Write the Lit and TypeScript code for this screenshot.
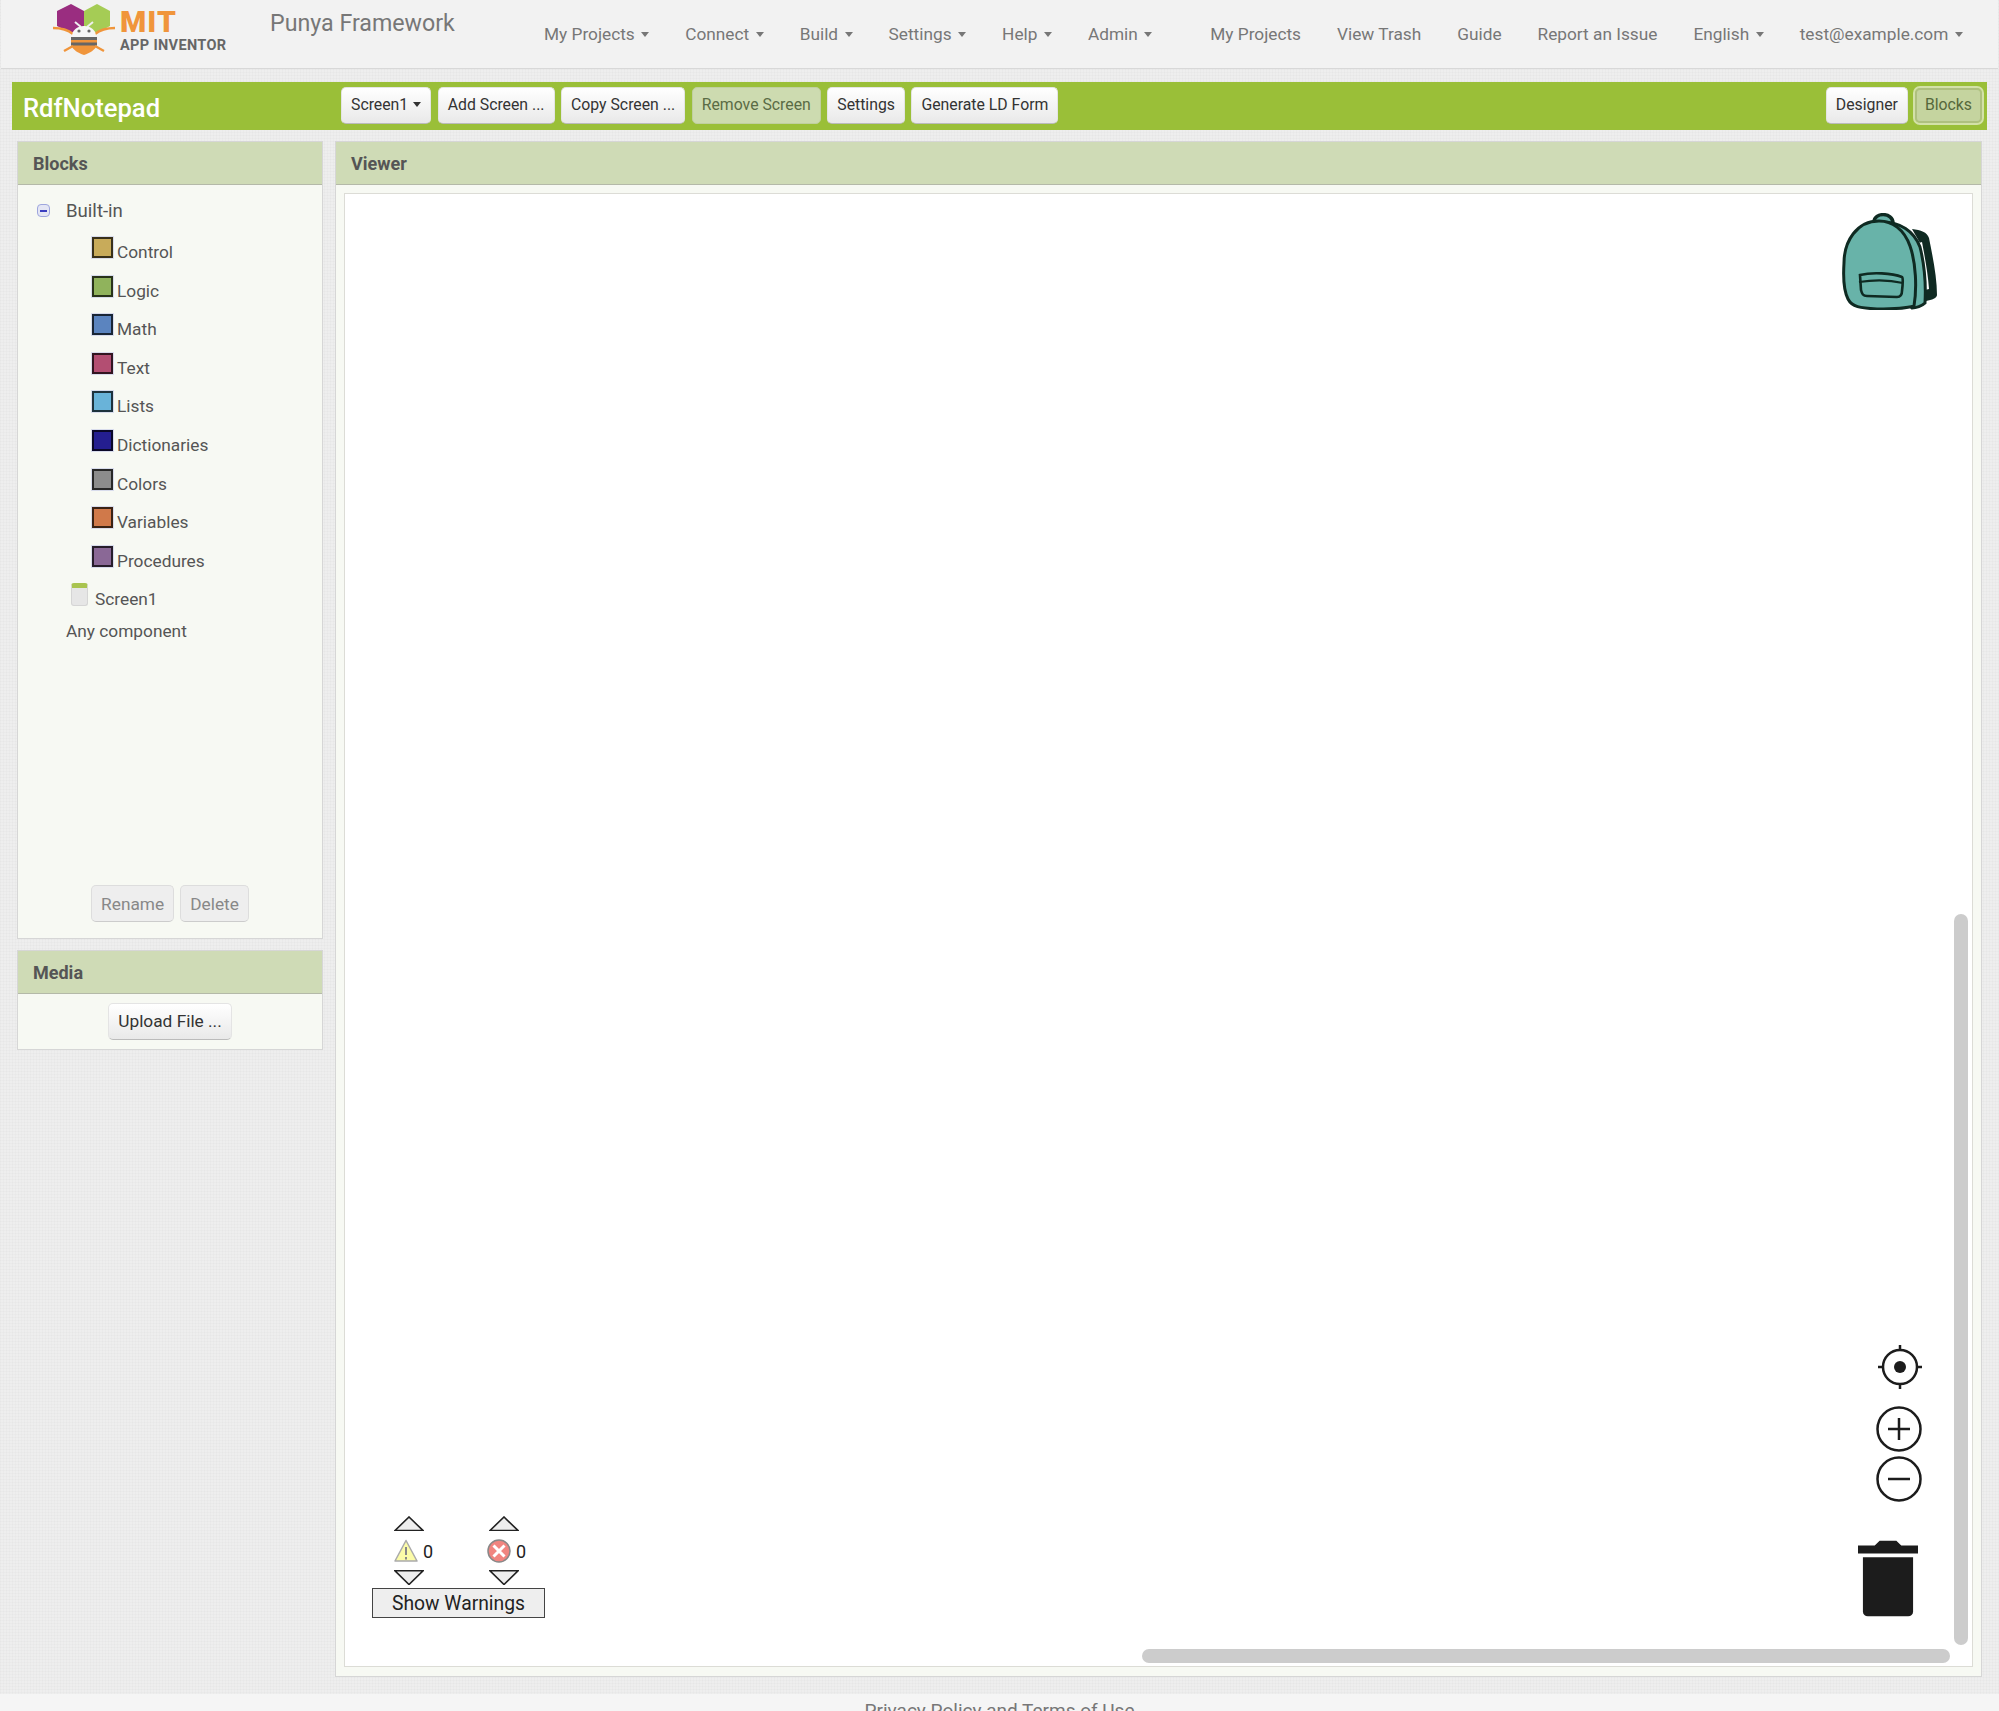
import { LitElement, html, css, svg } from 'lit';
import { customElement } from 'lit/decorators.js';

const CATEGORIES = [
  ['Control', '#c8ab5a'],
  ['Logic', '#90b35c'],
  ['Math', '#5b84bf'],
  ['Text', '#b34e72'],
  ['Lists', '#69b3d9'],
  ['Dictionaries', '#241e90'],
  ['Colors', '#8c8c8c'],
  ['Variables', '#d0794a'],
  ['Procedures', '#8a6896'],
];

const caret = html`<i class="caret"></i>`;

const triUp = svg`<path d="M1 14.5 15 1l14 13.5Z" fill="#eee" stroke="#222" stroke-width="1.6"/>`;
const triDown = svg`<path d="M1 .8h28L15 14.5Z" fill="#eee" stroke="#222" stroke-width="1.6"/>`;

@customElement('app-root')
export class AppRoot extends LitElement {
  static styles = css`
    :host {
      display: flex;
      flex-direction: column;
      height: 1711px;
      overflow: hidden;
      font-family: Roboto, sans-serif;
      color: #555;
      background-color: #eee;
      background-image:
        repeating-linear-gradient(0deg, rgba(0, 0, 0, 0.016) 0 1px, transparent 1px 3px),
        repeating-linear-gradient(90deg, rgba(0, 0, 0, 0.016) 0 1px, transparent 1px 3px);
    }

    /* top bar */
    .header {
      flex: none;
      height: 68px;
      margin-inline: 1px;
      background: #f2f2f2;
      border-bottom: 1px solid #d8d8d8;
      display: flex;
      align-items: flex-start;
    }
    .logo {
      display: flex;
      width: 219px;
      padding-left: 50px;
      flex: none;
    }
    .logo svg {
      width: 68px;
      height: 60px;
      flex: none;
    }
    .logoText {
      margin-left: 1px;
      font-weight: 700;
      display: flex;
      flex-direction: column;
    }
    .mit {
      color: #f0953b;
      font-size: 30px;
      font-weight: 900;
      line-height: 28px;
      margin-top: 8px;
      letter-spacing: 1px;
    }
    .inventor {
      color: #666;
      font-size: 14.5px;
      line-height: 16px;
      white-space: nowrap;
      margin-top: 2px;
      letter-spacing: 0.35px;
    }
    .brand {
      flex: none;
      width: 274px;
      font-size: 23.2px;
      line-height: 47px;
      color: #777;
    }
    .nav {
      display: flex;
      align-items: center;
      height: 68px;
      font-size: 17.25px;
      color: #777;
      white-space: nowrap;
    }
    .nav span {
      margin-right: 36px;
    }
    .nav span.split {
      margin-right: 58px;
    }
    .caret {
      display: inline-block;
      margin-left: 5px;
      vertical-align: 3px;
      border-top: 5px solid currentColor;
      border-inline: 4px solid transparent;
    }
    .nav .caret {
      margin-left: 6.5px;
    }

    /* green toolbar */
    .toolbar {
      flex: none;
      height: 48px;
      margin: 13px 12px 0;
      padding-left: 11px;
      background: #9abf38;
      display: flex;
      align-items: center;
    }
    .title {
      flex: none;
      width: 318px;
      padding-top: 3px;
      color: #fff;
      font-size: 25.6px;
      font-weight: 500;
    }
    .btns {
      display: flex;
      gap: 6.5px;
      margin-top: -1px;
    }
    .btns.right {
      margin-left: auto;
      margin-right: 5px;
      gap: 7px;
      align-items: center;
    }
    .btn {
      height: 37px;
      box-sizing: border-box;
      padding: 0 9px 2px;
      display: flex;
      align-items: center;
      font-size: 15.8px;
      color: #333;
      white-space: nowrap;
      border: 1px solid #e4e4e4;
      border-bottom-color: #bbb;
      border-radius: 5px;
      background: linear-gradient(#fff, #e9e9e9);
    }
    .btn.off {
      background: #cddbb0;
      border-color: #c0cfa0;
      color: #5a6b45;
    }
    .btn.current {
      height: 35px;
      padding-inline: 8px;
      background: #c5d49f;
      border: 2px solid #aec07f;
      outline: 2px solid #d3e1a8;
      color: #56683b;
    }
    .btn.dis {
      padding-bottom: 0;
      background: #eee;
      border-color: #ddd;
      border-bottom-color: #ccc;
      color: #888;
    }

    /* panels */
    .main {
      flex: none;
      height: 1534px;
      display: flex;
      gap: 14px;
      padding: 12px 18px 0;
    }
    .side {
      flex: none;
      width: 304px;
      display: flex;
      flex-direction: column;
      gap: 13px;
    }
    .panel {
      background: #f7f9f3;
      box-shadow: 0 0 0 1px #d6d6d6;
      display: flex;
      flex-direction: column;
    }
    .panelHead {
      flex: none;
      height: 42px;
      padding-left: 15px;
      background: #cfdbb6;
      border-bottom: 1px solid #b4b9a8;
      font-size: 18px;
      font-weight: 700;
      line-height: 43px;
      color: #555;
    }
    .blocks {
      height: 796px;
    }
    .tree {
      flex: 1;
      padding: 15px 0 0 19px;
      font-size: 17.3px;
      color: #555;
    }
    .builtin {
      display: flex;
      align-items: center;
      height: 21px;
      margin-bottom: 16px;
      font-size: 18.6px;
    }
    .toggle {
      width: 13px;
      height: 13px;
      box-sizing: border-box;
      border: 1px solid #9ea6dd;
      border-radius: 4px;
      background: #e4e6f4;
      display: flex;
      align-items: center;
      justify-content: center;
      margin-right: 16px;
    }
    .toggle i {
      width: 7px;
      height: 2px;
      background: #3b3fc0;
    }
    .row {
      display: flex;
      height: 38.6px;
      padding-left: 55px;
    }
    .swatch {
      width: 21px;
      height: 21px;
      box-sizing: border-box;
      border: 2px solid rgba(0, 0, 0, 0.72);
      box-shadow: 0 0 0 1px #d8dcec;
      margin-right: 4px;
    }
    .row span {
      line-height: 20px;
      margin-top: 5px;
    }
    .screen {
      display: flex;
      height: 39px;
      margin-top: -1px;
      padding-left: 34px;
    }
    .screenIcon {
      width: 17px;
      height: 23px;
      box-sizing: border-box;
      border: 1px solid #d5d5d5;
      border-top: 5px solid #a9c44f;
      border-radius: 3px;
      background: #e6e6e6;
      margin-right: 7px;
    }
    .screen span {
      line-height: 20px;
      margin-top: 6px;
    }
    .any {
      line-height: 20px;
      margin-top: -1px;
      margin-left: 29px;
    }
    .actions {
      display: flex;
      justify-content: center;
      gap: 6px;
      padding-bottom: 16px;
    }
    .actions .btn,
    .upload .btn {
      font-size: 17.3px;
    }
    .upload {
      display: flex;
      justify-content: center;
      padding: 9px 0;
    }

    .viewer {
      flex: 1;
    }
    .workspace {
      position: relative;
      margin: 8px 8px 9px 8px;
      flex: 1;
      background: #fff;
      border: 1px solid #dcdcd6;
    }
    .over {
      position: absolute;
    }
    .backpack {
      right: 35px;
      top: 19px;
      width: 95px;
      height: 97px;
    }
    .target {
      right: 48px;
      bottom: 275px;
      width: 48px;
      height: 48px;
    }
    .zoomIn {
      right: 49px;
      bottom: 213px;
      width: 48px;
      height: 48px;
    }
    .zoomOut {
      right: 49px;
      bottom: 163px;
      width: 48px;
      height: 48px;
    }
    .trash {
      right: 54px;
      bottom: 49px;
      width: 60px;
      height: 77px;
    }
    .vbar {
      right: 4px;
      top: 720px;
      bottom: 21px;
      width: 14px;
      border-radius: 7px;
      background: #ccc;
    }
    .hbar {
      left: 797px;
      right: 22px;
      bottom: 3px;
      height: 14px;
      border-radius: 7px;
      background: #ccc;
    }
    .warnings {
      left: 27px;
      bottom: 48px;
      width: 173px;
      display: flex;
      flex-direction: column;
    }
    .counters {
      display: flex;
      padding-left: 22px;
      gap: 65px;
    }
    .counter {
      width: 30px;
      display: flex;
      flex-direction: column;
    }
    .tri {
      width: 30px;
      height: 15px;
      display: block;
    }
    .count {
      display: flex;
      align-items: center;
      gap: 5px;
      height: 24px;
      margin: 8px 0 7px;
      font-size: 18px;
      color: #222;
    }
    .count svg {
      width: 24px;
      height: 24px;
      flex: none;
    }
    .count.err {
      margin-left: -2px;
    }
    .show {
      height: 30px;
      box-sizing: border-box;
      margin-top: 3px;
      background: #eee;
      border: 1px solid #444;
      font-size: 19.3px;
      line-height: 30px;
      color: #222;
      text-align: center;
    }

    .footer {
      flex: none;
      height: 17px;
      box-sizing: border-box;
      margin-top: 18px;
      padding-top: 6px;
      background: #f5f5f5;
      text-align: center;
      font-size: 19px;
      line-height: 22px;
      color: #777;
      overflow: hidden;
    }
  `;

  logo() {
    return html`<svg viewBox="0 0 68 60">
      <path d="M20 4 33 11V26L20 33 6 26V11Z" fill="#9a2d80"/>
      <path d="M46 4 59 11V26L46 33 33 26V11Z" fill="#a5cc55"/>
      <path d="M2 28c8 0 14 1 20 6M64 28c-8 0-14 1-20 6" fill="none" stroke="#f0953b" stroke-width="2.4"/>
      <path d="M24 22l6 5M42 22l-6 5" stroke="#eee" stroke-width="2"/>
      <path d="M21 37c0-7 5-11 12-11s12 4 12 11Z" fill="#f6f6f6"/>
      <circle cx="28" cy="31" r="1.6" fill="#666"/>
      <circle cx="38" cy="31" r="1.6" fill="#666"/>
      <path d="M20 37h26v8c-2 5-7 8-13 10-6-2-11-5-13-10Z" fill="#f0953b"/>
      <path d="M20 37h26v3H20ZM20 42.500h26v3H20Z" fill="#666"/>
      <path d="M22 46l-9 5M44 46l9 5" fill="none" stroke="#f0953b" stroke-width="2.4"/>
    </svg>`;
  }

  backpack() {
    const dark = '#0f2a22';
    return html`<svg class="over backpack" viewBox="0 0 95 97">
      <path d="M70 16c9 1 15 3 17 9 4 20 8 40 8 57 0 3-5 5-11 6L78 30Z" fill="${dark}"/>
      <path d="M80 29c3 16 6 32 7 47l-4 1c0-17-2-32-6-47Z" fill="#fff"/>
      <path d="M32 9c0-10 19-10 19 1" fill="#68b3a9" stroke="${dark}" stroke-width="3.5"/>
      <path d="M40 9c18 0 32 9 38 25 4 16 6 38 5 56-3 3-9 5-13 5L40 60Z" fill="#68b3a9" stroke="${dark}" stroke-width="3"/>
      <path d="M37 8C15 8 2 28 2 50c-1 15 0 28 4 36 4 8 12 9 29 10 15 0 27 0 37-3 3-18 2-43-4-60C62 16 50 8 37 8Z" fill="#68b3a9" stroke="${dark}" stroke-width="3"/>
      <path d="M18 62c12-3 32-2 42 2 1 0 1 6 0 14 0 4-2 6-5 6l-30-1c-4 0-5-2-6-6Z" fill="#68b3a9" stroke="${dark}" stroke-width="2.6"/>
      <path d="M17 69c13-2 31-2 44 1" fill="none" stroke="${dark}" stroke-width="2.2"/>
    </svg>`;
  }

  controls() {
    return html`
      <svg class="over target" viewBox="0 0 48 48" fill="none" stroke="#1c1c1c" stroke-width="2.5">
        <circle cx="24" cy="24" r="17"/>
        <circle cx="24" cy="24" r="6" fill="#1c1c1c" stroke="none"/>
        <path d="M24 2v5M24 41v5M2 24h5M41 24h5"/>
      </svg>
      <svg class="over zoomIn" viewBox="0 0 48 48" fill="none" stroke="#1c1c1c" stroke-width="2.5">
        <circle cx="24" cy="24" r="21.500"/>
        <path d="M24 13v22M13 24h22"/>
      </svg>
      <svg class="over zoomOut" viewBox="0 0 48 48" fill="none" stroke="#1c1c1c" stroke-width="2.5">
        <circle cx="24" cy="24" r="21.500"/>
        <path d="M13 24h22"/>
      </svg>
      <svg class="over trash" viewBox="0 0 61 77" fill="#1c1c1c">
        <path d="M0 5h17l5-5h17l5 5h17v8H0Z"/>
        <path d="M5 17h51v55a5 5 0 0 1-5 5H10a5 5 0 0 1-5-5Z"/>
      </svg>
    `;
  }

  warnings() {
    return html`<div class="over warnings">
      <div class="counters">
        <div class="counter">
          <svg class="tri" viewBox="0 0 30 15">${triUp}</svg>
          <div class="count">
            <svg viewBox="0 0 24 24">
              <path d="M12 1.500 23 22H1Z" fill="#fbfba8" stroke="#aaa" stroke-width="1.5" stroke-linejoin="round"/>
              <path d="M12 8v8M12 18v2.400" stroke="#888" stroke-width="2"/>
            </svg>
            <span>0</span>
          </div>
          <svg class="tri" viewBox="0 0 30 15">${triDown}</svg>
        </div>
        <div class="counter">
          <svg class="tri" viewBox="0 0 30 15">${triUp}</svg>
          <div class="count err">
            <svg viewBox="0 0 24 24">
              <circle cx="12" cy="12" r="11" fill="#f08580" stroke="#888" stroke-width="1.5"/>
              <path d="M6.500 6.500l11 11M17.500 6.500l-11 11" stroke="#fff" stroke-width="3"/>
            </svg>
            <span>0</span>
          </div>
          <svg class="tri" viewBox="0 0 30 15">${triDown}</svg>
        </div>
      </div>
      <div class="show">Show Warnings</div>
    </div>`;
  }

  render() {
    return html`
      <div class="header">
        <div class="logo">
          ${this.logo()}
          <div class="logoText">
            <span class="mit">MIT</span>
            <span class="inventor">APP INVENTOR</span>
          </div>
        </div>
        <div class="brand">Punya Framework</div>
        <div class="nav">
          <span>My Projects${caret}</span>
          <span>Connect${caret}</span>
          <span>Build${caret}</span>
          <span>Settings${caret}</span>
          <span>Help${caret}</span>
          <span class="split">Admin${caret}</span>
          <span>My Projects</span>
          <span>View Trash</span>
          <span>Guide</span>
          <span>Report an Issue</span>
          <span>English${caret}</span>
          <span>test@example.com${caret}</span>
        </div>
      </div>

      <div class="toolbar">
        <div class="title">RdfNotepad</div>
        <div class="btns">
          <div class="btn">Screen1${caret}</div>
          <div class="btn">Add Screen ...</div>
          <div class="btn">Copy Screen ...</div>
          <div class="btn off">Remove Screen</div>
          <div class="btn">Settings</div>
          <div class="btn">Generate LD Form</div>
        </div>
        <div class="btns right">
          <div class="btn">Designer</div>
          <div class="btn current">Blocks</div>
        </div>
      </div>

      <div class="main">
        <div class="side">
          <div class="panel blocks">
            <div class="panelHead">Blocks</div>
            <div class="tree">
              <div class="builtin"><div class="toggle"><i></i></div>Built-in</div>
              ${CATEGORIES.map(
                ([name, color]) => html`<div class="row">
                  <div class="swatch" style="background-color:${color}"></div>
                  <span>${name}</span>
                </div>`
              )}
              <div class="screen"><div class="screenIcon"></div><span>Screen1</span></div>
              <div class="any">Any component</div>
            </div>
            <div class="actions">
              <div class="btn dis">Rename</div>
              <div class="btn dis">Delete</div>
            </div>
          </div>
          <div class="panel">
            <div class="panelHead">Media</div>
            <div class="upload"><div class="btn">Upload File ...</div></div>
          </div>
        </div>

        <div class="panel viewer">
          <div class="panelHead">Viewer</div>
          <div class="workspace">
            ${this.backpack()}
            ${this.controls()}
            ${this.warnings()}
            <div class="over vbar"></div>
            <div class="over hbar"></div>
          </div>
        </div>
      </div>

      <div class="footer">Privacy Policy and Terms of Use</div>
    `;
  }
}
